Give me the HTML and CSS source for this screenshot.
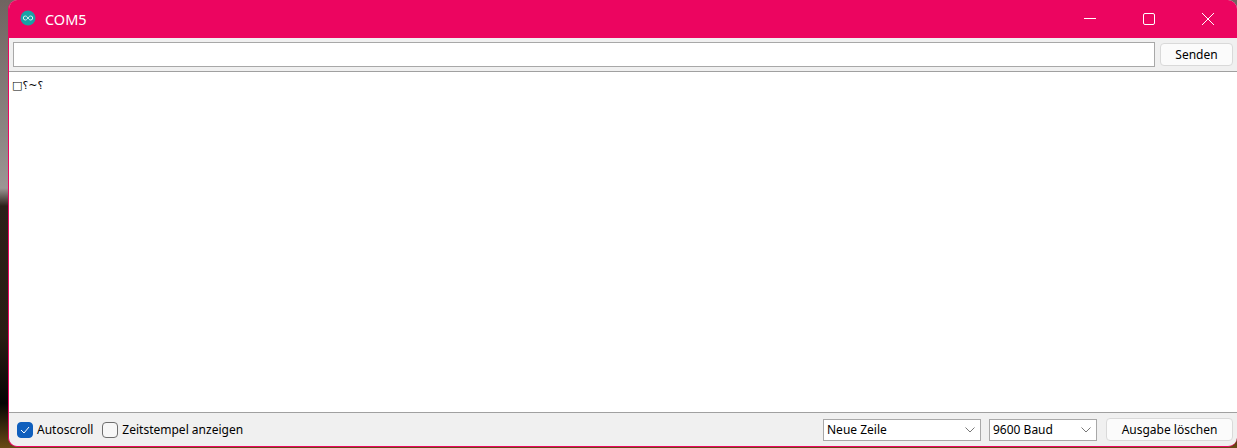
FILE: index.html
```html
<!DOCTYPE html>
<html lang="de">
<head>
<meta charset="utf-8">
<title>COM5</title>
<link rel="stylesheet" href="styles.css">
</head>
<body>
<div class="window">
  <header class="titlebar">
    <svg class="app-icon" width="16" height="16" viewBox="0 0 16 16"><circle cx="8" cy="8" r="7.500" fill="#17a1a5"/><path d="M8 8c-1-1.500-1.800-2-2.700-2a2 2 0 0 0 0 4C6.200 10 7 9.500 8 8c1 1.500 1.800 2 2.700 2a2 2 0 0 0 0-4C9.800 6 9 6.500 8 8z" fill="none" stroke="#d8f3f3" stroke-width="1"/></svg>
    <span class="title">COM5</span>
    <div class="controls">
      <svg class="ctl" width="46" height="38" viewBox="0 0 46 38"><path d="M15 18.500h12" stroke="#fff" fill="none"/></svg>
      <svg class="ctl" width="46" height="38" viewBox="0 0 46 38"><rect x="16.500" y="13.500" width="11" height="11" rx="1.500" stroke="#fff" fill="none"/></svg>
      <svg class="ctl" width="46" height="38" viewBox="0 0 46 38"><path d="M17 13l12 12M29 13l-12 12" stroke="#fff" fill="none"/></svg>
    </div>
  </header>
  <div class="sendbar">
    <input class="send-input" type="text" aria-label="Senden">
    <button class="btn btn-send">Senden</button>
  </div>
  <main class="output"><bdo dir="ltr" class="output-text">□؟~؟</bdo></main>
  <footer class="statusbar">
    <label class="check"><span class="box box-on"><svg width="10" height="8" viewBox="0 0 10 8"><path d="M1 4l3 3 5-6" stroke="#fff" stroke-width="1" fill="none"/></svg></span>Autoscroll</label>
    <label class="check check-second"><span class="box"></span>Zeitstempel anzeigen</label>
    <div class="spacer"></div>
    <div class="select select-line"><span>Neue Zeile</span><svg width="10" height="6" viewBox="0 0 10 6"><path d="M.5.500l4.500 4.500 4.500-4.500" stroke="#777" fill="none"/></svg></div>
    <div class="select select-baud"><span>9600 Baud</span><svg width="10" height="6" viewBox="0 0 10 6"><path d="M.5.500l4.500 4.500 4.500-4.500" stroke="#777" fill="none"/></svg></div>
    <button class="btn btn-clear">Ausgabe löschen</button>
  </footer>
</div>
</body>
</html>
```
FILE: styles.css
```css
* { box-sizing: border-box; }
html, body { margin: 0; height: 100%; }
body {
  width: 1237px;
  height: 448px;
  overflow: hidden;
  padding-left: 8px;
  background: linear-gradient(180deg, #6f6460 0, #8c8683 30%, #9c9694 42%, #2c2019 46%, #2a1d13 75%, #050403 90%, #6a4a14 100%);
  font-family: "Noto Sans", "Open Sans", sans-serif;
  font-size: 12px;
  color: #000;
}
.window {
  width: 1229px;
  height: 447px;
  display: flex;
  flex-direction: column;
  background: #f0f0f0;
  border-left: 1px solid #ec0560;
  border-bottom: 1px solid #ec0560;
  border-radius: 9px;
  overflow: hidden;
}
.titlebar {
  height: 38px;
  flex: none;
  display: flex;
  align-items: center;
  background: #ec0560;
  color: #fff;
  padding-left: 11px;
}
.app-icon { margin-top: -2px; }
.title { margin-left: 9px; font-size: 14.500px; margin-top: -1px; }
.controls { margin-left: auto; display: flex; gap: 12px; margin-right: 6px; }
.sendbar {
  height: 34px;
  flex: none;
  display: flex;
  padding: 4px 4px 0 4px;
  gap: 5px;
  border-bottom: 1px solid #a0a0a0;
}
.send-input {
  width: 1142px;
  height: 25px;
  border: 1px solid #a8a8a8;
  background: #fff;
  padding: 0;
}
.btn {
  border: 1px solid #d9d9d9;
  background: #fbfbfb;
  border-radius: 4px;
  font: inherit;
  color: #000;
  padding: 0;
}
.btn-send { width: 73px; height: 23px; margin-top: 1px; }
.output {
  flex: 1;
  background: #fff;
  border-bottom: 1px solid #a0a0a0;
  padding: 5px 0 0 3px;
  line-height: 16px;
}
.output-text { font-family: "DejaVu Sans", sans-serif; font-size: 11px; }
.statusbar {
  height: 33px;
  flex: none;
  display: flex;
  align-items: center;
  padding: 0 4px 0 8px;
}
.check { display: flex; align-items: center; gap: 4px; }
.check-second { margin-left: 9px; }
.box {
  width: 16px;
  height: 16px;
  border: 1px solid #6e6e6e;
  border-radius: 4px;
  background: #f7f7f7;
  display: flex;
  align-items: center;
  justify-content: center;
}
.box-on { background: #0f5fbd; border-color: #0f5fbd; }
.spacer { flex: 1; }
.select {
  height: 22px;
  border: 1px solid #a8a8a8;
  background: #fff;
  display: flex;
  align-items: center;
  justify-content: space-between;
  padding: 0 5px 0 3px;
}
.select-line { width: 158px; }
.select-baud { width: 108px; margin-left: 8px; }
.btn-clear { width: 127px; height: 23px; margin-left: 9px; }
```
